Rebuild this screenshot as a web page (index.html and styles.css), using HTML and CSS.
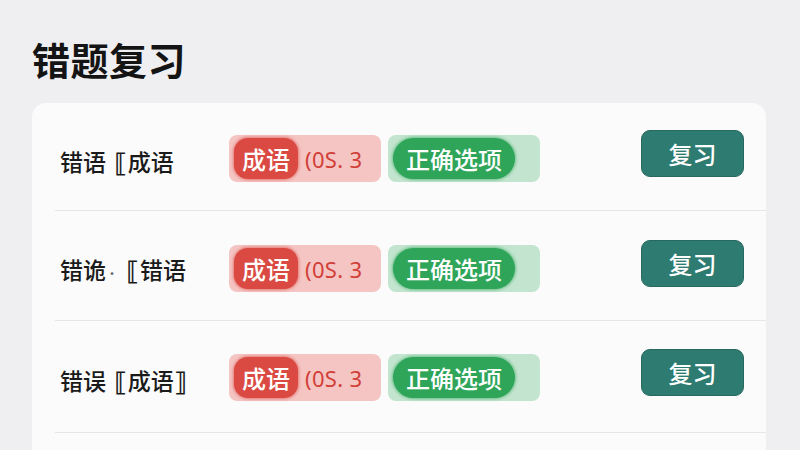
FILE: index.html
```html
<!DOCTYPE html>
<html lang="zh-CN">
<head>
<meta charset="utf-8">
<title>错题复习</title>
<link rel="stylesheet" href="styles.css">
</head>
<body>
<main class="page">
  <h1 class="title">错题复习</h1>
  <section class="card">
    <div class="row">
      <div class="label">错语 <span class="br">⟦</span>成语</div>
      <div class="tag tag-red"><span class="chip chip-red">成语</span><span class="code">(0S. 3</span></div>
      <div class="tag tag-green"><span class="chip chip-green">正确选项</span></div>
      <button class="btn">复习</button>
    </div>
    <div class="row">
      <div class="label">错诡<span class="dot">·</span> <span class="br">⟦</span>错语</div>
      <div class="tag tag-red"><span class="chip chip-red">成语</span><span class="code">(0S. 3</span></div>
      <div class="tag tag-green"><span class="chip chip-green">正确选项</span></div>
      <button class="btn">复习</button>
    </div>
    <div class="row">
      <div class="label">错误 <span class="br">⟦</span>成语<span class="br br-end">⟧</span></div>
      <div class="tag tag-red"><span class="chip chip-red">成语</span><span class="code">(0S. 3</span></div>
      <div class="tag tag-green"><span class="chip chip-green">正确选项</span></div>
      <button class="btn">复习</button>
    </div>
    <div class="row row-last"></div>
  </section>
</main>
</body>
</html>
```

FILE: styles.css
```css
* { box-sizing: border-box; }
html, body { margin: 0; padding: 0; }
body {
  background: #efeff1;
  font-family: "Noto Sans CJK SC", "Noto Sans", sans-serif;
  width: 800px;
  height: 450px;
  overflow: hidden;
}
.page {
  padding: 34px 34px 0 32px;
}
.title {
  margin: 0 0 19px 0;
  font-size: 38px;
  line-height: 50px;
  font-weight: 700;
  color: #141414;
  letter-spacing: 0.5px;
}
.card {
  background: #fbfbfb;
  border-radius: 14px 14px 0 0;
  width: 734px;
}
.row {
  display: grid;
  grid-template-columns: 162px 152px 152px 1fr 103px;
  column-gap: 7px;
  align-items: center;
  height: 110px;
  padding: 7px 22px 0 28px;
  position: relative;
}
.row:first-child {
  height: 107px;
  padding-top: 4px;
}
.row:nth-child(3) { height: 112px; padding-top: 3px; }
.row + .row::before {
  content: "";
  position: absolute;
  left: 23px;
  right: 0;
  top: 0;
  height: 1px;
  background: #e6e6e6;
}
.label {
  font-size: 23px;
  font-weight: 500;
  color: #1a1a1a;
  white-space: nowrap;
  padding-top: 6px;
  line-height: 32px;
}
.br {
  font-family: "DejaVu Sans", sans-serif;
  font-weight: 700;
  font-size: 26px;
  margin-left: 3px;
  margin-right: 1px;
  vertical-align: -1px;
}
.br-end { margin-left: 0; }
.dot { font-size: 12px; color: #666; }
.tag {
  height: 47px;
  border-radius: 8px;
  padding: 4px 5px;
  display: flex;
  align-items: center;
}
.tag-red { background: #f5c5c3; }
.tag-green { background: #c3e5cf; grid-column: 3; }
.chip {
  height: 41px;
  display: flex;
  align-items: center;
  justify-content: center;
  color: #fff;
  font-size: 24px;
  font-weight: 500;
}
.chip-red {
  width: 64px;
  background: #da4a42;
  border-radius: 14px;
  box-shadow: 0 0 3px 1px rgba(218, 74, 66, 0.6);
}
.chip-green {
  width: 122px;
  background: #2ea559;
  border-radius: 21px;
  box-shadow: 0 0 3px 1px rgba(46, 165, 89, 0.6);
}
.code {
  margin-left: 7px;
  font-family: "Noto Sans", sans-serif;
  font-size: 22px;
  font-weight: 400;
  color: #d13f38;
  letter-spacing: 0.3px;
  white-space: nowrap;
}
.btn {
  grid-column: 5;
  height: 47px;
  width: 103px;
  border: 1px solid #27685f;
  border-radius: 9px;
  background: #2e7b71;
  color: #fff;
  font-family: "Noto Sans CJK SC", sans-serif;
  font-size: 24px;
  font-weight: 500;
  margin-top: -11px;
  padding: 0;
}
.row-last { height: 40px; }
```
